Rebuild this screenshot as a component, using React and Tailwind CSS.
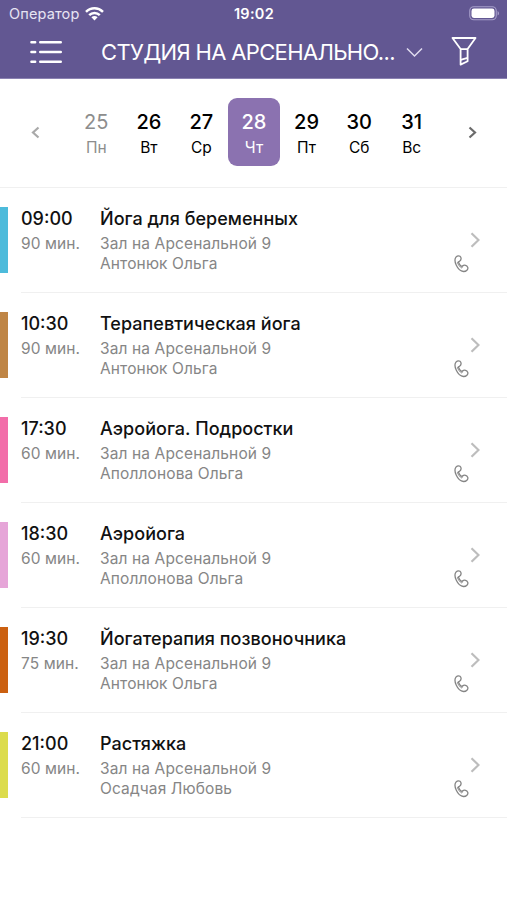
import clsx from 'clsx';

const days = [
  { date: 25, name: 'Пн', past: true },
  { date: 26, name: 'Вт' },
  { date: 27, name: 'Ср' },
  { date: 28, name: 'Чт', selected: true },
  { date: 29, name: 'Пт' },
  { date: 30, name: 'Сб' },
  { date: 31, name: 'Вс' },
];

const hall = 'Зал на Арсенальной 9';

const classes = [
  { time: '09:00', duration: '90 мин.', title: 'Йога для беременных', coach: 'Антонюк Ольга', color: 'bg-[#4dbbdb]' },
  { time: '10:30', duration: '90 мин.', title: 'Терапевтическая йога', coach: 'Антонюк Ольга', color: 'bg-[#bf8545]' },
  { time: '17:30', duration: '60 мин.', title: 'Аэройога. Подростки', coach: 'Аполлонова Ольга', color: 'bg-[#f26da9]' },
  { time: '18:30', duration: '60 мин.', title: 'Аэройога', coach: 'Аполлонова Ольга', color: 'bg-[#e6a5d8]' },
  { time: '19:30', duration: '75 мин.', title: 'Йогатерапия позвоночника', coach: 'Антонюк Ольга', color: 'bg-[#cb6010]' },
  { time: '21:00', duration: '60 мин.', title: 'Растяжка', coach: 'Осадчая Любовь', color: 'bg-[#dcdc4c]' },
];

const WifiIcon = () => (
  <svg className="ml-1.5 h-[14px] w-[19px]" viewBox="0 0 19 14" fill="none" stroke="white" strokeWidth="2.5">
    <path d="M1 4.8C5.8.1 13.2.1 18 4.8" />
    <path d="M4.2 8.1c3-2.9 7.6-2.9 10.6 0" />
    <path d="M9.5 13.4 6.4 10.3c1.8-1.6 4.4-1.6 6.2 0z" fill="white" stroke="none" />
  </svg>
);

const BatteryIcon = () => (
  <svg className="h-[15px] w-[31px]" viewBox="0 0 31 15" fill="none">
    <rect x=".75" y=".75" width="26.5" height="13" rx="4" stroke="#a79fca" strokeWidth="1.1" />
    <rect x="2.5" y="2.6" width="23" height="9.4" rx="2.4" fill="white" />
    <path d="M28.6 5v4.6c1.9-.8 1.9-3.8 0-4.6z" fill="#a79fca" />
  </svg>
);

const MenuIcon = () => (
  <svg className="h-6 w-8" viewBox="0 0 32 24" fill="none" stroke="white" strokeWidth="2.4" strokeLinecap="round">
    <path d="M1.4 2.2h3.8M10.2 2.2h20.6M1.4 12h3.8M10.2 12h20.6M1.4 21.7h3.8M10.2 21.7h20.6" />
  </svg>
);

const FilterIcon = () => (
  <svg className="h-[30px] w-[26px]" viewBox="0 0 26 30" fill="none" stroke="white" strokeWidth="1.8" strokeLinejoin="round">
    <path d="M1.5 2h23L16.6 13v12.3L9.6 28.6V13z" />
    <path d="M9.6 13.2h7M9.6 23.8l7-2" />
  </svg>
);

const PhoneIcon = () => (
  <svg className="h-[18px] w-[15px]" viewBox="0 0 15 18" fill="none" stroke="#858585" strokeWidth="1.3" strokeLinejoin="round">
    <path d="M1.2 3.7C1.8 1.3 4.4.1 6 1.3c1.7 1.3 1.3 4-.5 5-.9.4-1.1.8-.8 1.5.6 1.3 1.3 2.3 2.3 3.1.6.5 1.1.4 1.7-.1 1.7-1.3 4.2-.2 5 1.5.8 2-1.5 4.3-4.2 4.2C6.5 16.2 3.7 13.3 2.2 10 1.1 7.7.7 5.6 1.2 3.7z" />
    <path d="M5.3 6.3c-1 .6-2 .5-1.8 1.3.7 2.2 2.3 4.3 4.1 5.3.6.2.7-.9 1.3-1.8" strokeWidth="1" />
  </svg>
);

const Chevron = ({ className, d, viewBox, width = 2.2 }) => (
  <svg className={className} viewBox={viewBox} fill="none" stroke="currentColor" strokeWidth={width}>
    <path d={d} />
  </svg>
);

const Header = () => (
  <header className="h-[79px] border-b border-[#8b82b2] bg-[#625792] text-white">
    <div className="grid h-[27px] grid-cols-3 items-center pr-[7px] pl-[9px]">
      <div className="flex items-center text-[14.5px] tracking-[0.01em] text-[#e7e4f2]">
        Оператор
        <WifiIcon />
      </div>
      <div className="-ml-px text-center text-[14.5px] font-semibold tracking-[0.3px]">19:02</div>
      <div className="flex justify-end">
        <BatteryIcon />
      </div>
    </div>
    <div className="flex h-[50px] items-center pl-[30px]">
      <MenuIcon />
      <h1 className="ml-[39px] w-[296px] pt-px text-[22px] tracking-[-0.65px] whitespace-nowrap">СТУДИЯ НА АРСЕНАЛЬНО...</h1>
      <Chevron className="ml-[9px] h-[11px] w-[17px] text-[#e0dcf0]" viewBox="0 0 17 11" d="M1 1.5 8.5 9 16 1.5" width={1.5} />
      <div className="-mt-[3px] ml-[28px]">
        <FilterIcon />
      </div>
    </div>
  </header>
);

const DayStrip = () => (
  <div className="flex h-[109px] items-center border-b border-[#f0f0f0] pb-[2px]">
    <div className="flex w-[71px] justify-center pt-px">
      <Chevron className="h-[13px] w-[9px] text-[#a9a9a9]" viewBox="0 0 9 13" d="M7.5 1.5 2 6.5l5.5 5" />
    </div>
    <div className="-ml-px grid w-[368px] grid-cols-7">
      {days.map((day) => (
        <div
          key={day.date}
          className={clsx(
            'flex h-[68px] flex-col items-center rounded-[9px] pt-[11px]',
            day.selected && 'bg-[#8b72b0] text-white',
            day.past && 'text-[#8d8d8d]',
            !day.selected && !day.past && 'text-black'
          )}
        >
          <span className={clsx('text-[20px] leading-[27px]', day.past ? 'font-normal' : 'font-medium')}>{day.date}</span>
          <span className="text-[15.5px] leading-[24px]">{day.name}</span>
        </div>
      ))}
    </div>
    <div className="flex flex-1 justify-center pt-px">
      <Chevron className="h-[13px] w-[9px] text-[#6b6b6b]" viewBox="0 0 9 13" d="M1.5 1.5 7 6.5l-5.5 5" />
    </div>
  </div>
);

const ClassRow = ({ item }) => (
  <li className="flex h-[105px]">
    <div className={clsx('mt-[19px] h-[66px] w-2', item.color)} />
    <div className="ml-[13px] flex flex-1 border-b border-[#f0f0f0] pt-[18px]">
      <div className="w-[79px]">
        <div className="text-[18px] leading-[26px] font-medium text-[#111]">{item.time}</div>
        <div className="text-[15.5px] leading-6 tracking-[0.1px] text-[#868686]">{item.duration}</div>
      </div>
      <div className="flex-1 whitespace-nowrap">
        <div className="text-[18px] leading-[26px] font-medium tracking-[0.03px] text-[#111]">{item.title}</div>
        <div className="pt-[2px] text-[15.5px] leading-5 tracking-[0.12px] text-[#868686]">
          {hall}
          <br />
          {item.coach}
        </div>
      </div>
      <div className="flex w-[53px] flex-col pt-[26px]">
        <Chevron className="ml-[16px] h-4 w-[10px] text-[#bdbdbd]" viewBox="0 0 10 16" d="M1.5 1.2 8.5 8l-7 6.8" />
        <div className="mt-[7px]">
          <PhoneIcon />
        </div>
      </div>
    </div>
  </li>
);

export default function App() {
  return (
    <div className="h-[900px] w-[507px] overflow-hidden bg-white font-['Inter',sans-serif]">
      <Header />
      <DayStrip />
      <ul>
        {classes.map((item) => (
          <ClassRow key={item.time} item={item} />
        ))}
      </ul>
    </div>
  );
}
